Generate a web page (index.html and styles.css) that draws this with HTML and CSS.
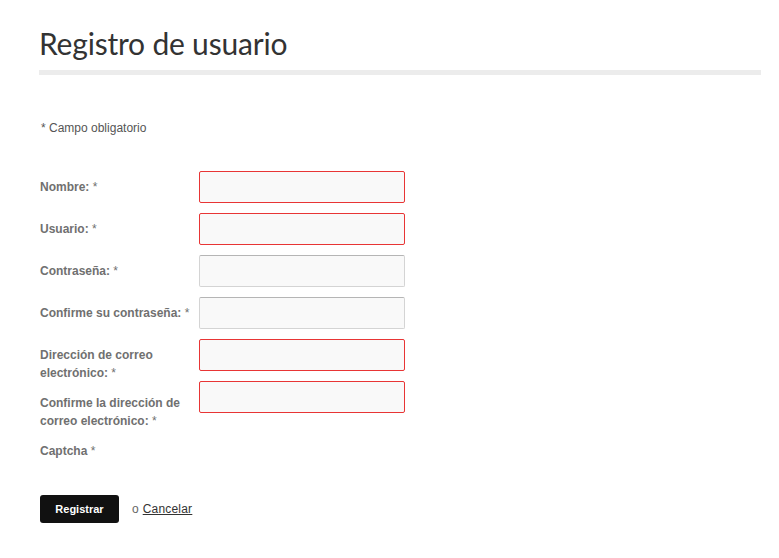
FILE: index.html
```html
<!DOCTYPE html>
<html lang="es">
<head>
    <meta charset="UTF-8">
    <meta name="viewport" content="width=device-width, initial-scale=1.0">
    <title>Registro de usuario</title>
    <link rel="stylesheet" href="styles.css">
</head>
<body>
    <main class="registration">
        <h1>Registro de usuario</h1>

        <form class="register-form" id="registerForm">
            <p class="required-note">* Campo obligatorio</p>

            <dl class="fields">
                <dt><label for="name">Nombre: <span class="star">*</span></label></dt>
                <dd><input type="text" id="name" class="invalid"></dd>

                <dt><label for="username">Usuario: <span class="star">*</span></label></dt>
                <dd><input type="text" id="username" class="invalid"></dd>

                <dt><label for="password1">Contraseña: <span class="star">*</span></label></dt>
                <dd><input type="password" id="password1"></dd>

                <dt><label for="password2">Confirme su contraseña: <span class="star">*</span></label></dt>
                <dd><input type="password" id="password2"></dd>

                <dt><label for="email1">Dirección de correo electrónico: <span class="star">*</span></label></dt>
                <dd><input type="email" id="email1" class="invalid"></dd>

                <dt><label for="email2">Confirme la dirección de correo electrónico: <span class="star">*</span></label></dt>
                <dd><input type="email" id="email2" class="invalid"></dd>

                <dt><label>Captcha <span class="star">*</span></label></dt>
                <dd class="captcha"></dd>
            </dl>

            <div class="actions">
                <button type="submit">Registrar</button>
                <span class="or">o</span>
                <a href="#" class="cancel">Cancelar</a>
            </div>
        </form>
    </main>
</body>
</html>
```

FILE: styles.css
```css
:root {
    --text-color: #333;
    --label-color: #707070;
    --note-color: #555;
    --rule-color: #ececec;
    --field-bg: #f9f9f9;
    --field-border: #d4d4d4;
    --error-color: #e83535;
}

* {
    margin: 0;
    padding: 0;
    box-sizing: border-box;
}

body {
    font-family: 'Liberation Sans', Arial, sans-serif;
    font-size: 12px;
    line-height: 18px;
    color: var(--text-color);
    background-color: #fff;
}

.registration {
    width: 722px;
    margin-left: 39px;
    padding-top: 26px;
}

h1 {
    font-family: 'Lato', 'Open Sans', sans-serif;
    font-weight: 400;
    font-size: 30px;
    line-height: 35px;
    color: #333;
    letter-spacing: -0.2px;
    padding-bottom: 9px;
    border-bottom: 5px solid var(--rule-color);
}

.required-note {
    margin-top: 44px;
    padding-left: 2px;
    color: var(--note-color);
}

.fields {
    margin-top: 34px;
}

.fields dt {
    float: left;
    clear: left;
    width: 156px;
    padding: 7px 0 0 1px;
    margin-bottom: 5px;
    font-weight: 700;
    color: var(--label-color);
}

.fields .star {
    font-weight: 400;
}

.fields dd {
    margin: 0 0 10px 160px;
}

.fields dd.captcha {
    margin-bottom: 0;
}

input {
    display: block;
    width: 206px;
    height: 32px;
    padding: 0 6px;
    background-color: var(--field-bg);
    border: 1px solid var(--field-border);
    border-top-color: #b5b5b5;
    border-radius: 2px;
    font-family: inherit;
    font-size: 12px;
}

input.invalid {
    border-color: var(--error-color);
}

input:focus {
    outline: none;
}

.actions {
    clear: both;
    padding-top: 30px;
    padding-left: 1px;
    display: flex;
    align-items: center;
    gap: 13px;
}

button {
    width: 79px;
    height: 28px;
    background-color: #111;
    color: #fff;
    border: none;
    border-radius: 3px;
    font-family: inherit;
    font-size: 11px;
    font-weight: 700;
    cursor: pointer;
}

.or {
    color: #666;
    margin-right: -9px;
}

.cancel {
    color: var(--text-color);
    text-decoration: underline;
    letter-spacing: 0.2px;
}
```
